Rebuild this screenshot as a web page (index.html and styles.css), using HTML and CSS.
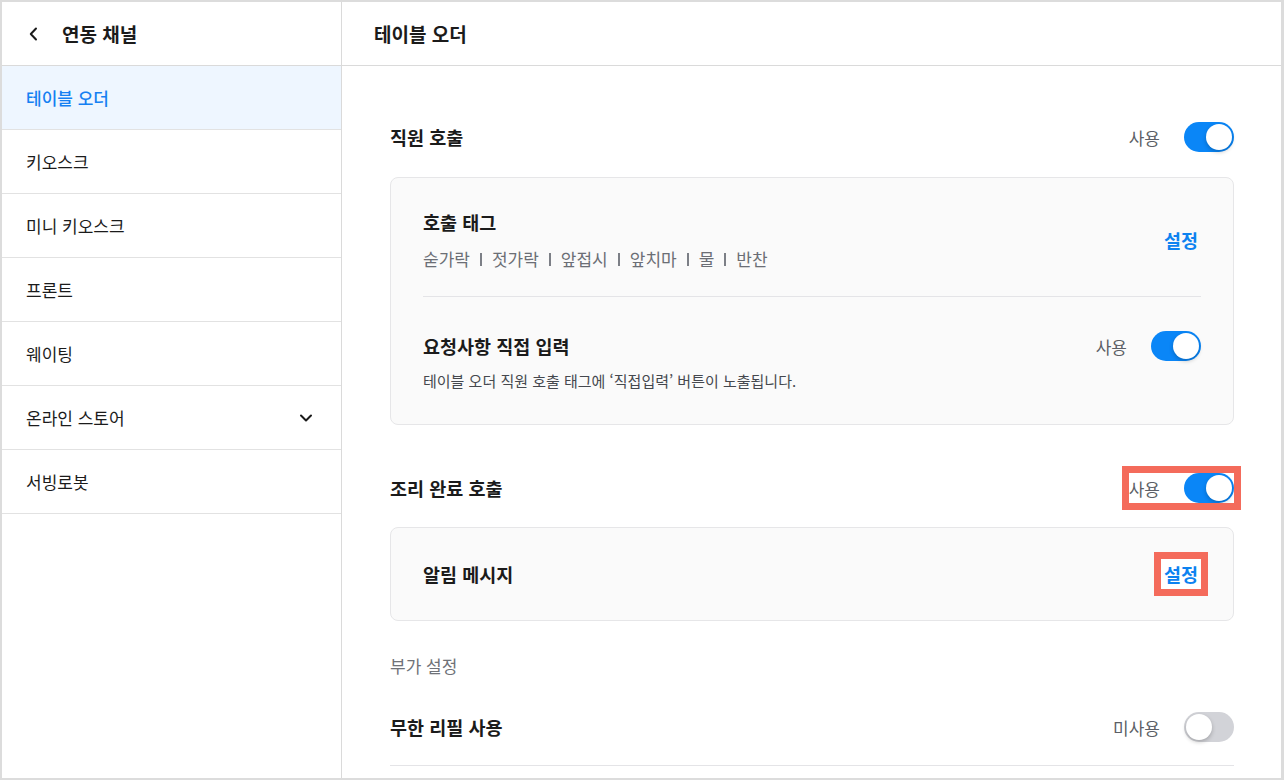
FILE: index.html
```html
<!DOCTYPE html>
<html lang="ko">
<head>
<meta charset="utf-8">
<title>테이블 오더</title>
<link rel="stylesheet" href="styles.css">
</head>
<body>
<div class="frame">
  <aside class="sidebar">
    <div class="side-head">
      <svg class="back" width="12" height="14" viewBox="0 0 12 14"><path d="M8 1.5 L2.8 7 L8 12.5" fill="none" stroke="#1a1a1a" stroke-width="2" stroke-linecap="round" stroke-linejoin="round"/></svg>
      <span class="side-title">연동 채널</span>
    </div>
    <ul class="menu">
      <li class="menu-item active">테이블 오더</li>
      <li class="menu-item">키오스크</li>
      <li class="menu-item">미니 키오스크</li>
      <li class="menu-item">프론트</li>
      <li class="menu-item">웨이팅</li>
      <li class="menu-item has-sub">온라인 스토어
        <svg class="chev" width="14" height="10" viewBox="0 0 14 10"><path d="M2 2.5 L7 7.5 L12 2.5" fill="none" stroke="#1a1a1a" stroke-width="2" stroke-linecap="round" stroke-linejoin="round"/></svg>
      </li>
      <li class="menu-item">서빙로봇</li>
    </ul>
  </aside>
  <main class="main">
    <header class="main-head">테이블 오더</header>
    <div class="content">
      <div class="row">
        <span class="row-title">직원 호출</span>
        <div class="switch-group">
          <span class="switch-label">사용</span>
          <span class="toggle on"><span class="knob"></span></span>
        </div>
      </div>
      <div class="card first-card">
        <div class="card-item tag-item">
          <div class="tag-info">
            <div class="item-title">호출 태그</div>
            <div class="tags">
              <span>숟가락</span><span class="sep"></span>
              <span>젓가락</span><span class="sep"></span>
              <span>앞접시</span><span class="sep"></span>
              <span>앞치마</span><span class="sep"></span>
              <span>물</span><span class="sep"></span>
              <span>반찬</span>
            </div>
          </div>
          <span class="link-btn">설정</span>
        </div>
        <div class="card-item req-item">
          <div class="row">
            <span class="item-title">요청사항 직접 입력</span>
            <div class="switch-group">
              <span class="switch-label">사용</span>
              <span class="toggle on"><span class="knob"></span></span>
            </div>
          </div>
          <p class="desc">테이블 오더 직원 호출 태그에 ‘직접입력’ 버튼이 노출됩니다.</p>
        </div>
      </div>

      <div class="row section-gap">
        <span class="row-title">조리 완료 호출</span>
        <div class="switch-group highlight">
          <span class="switch-label">사용</span>
          <span class="toggle on"><span class="knob"></span></span>
        </div>
      </div>
      <div class="card second-card">
        <div class="row">
          <span class="item-title">알림 메시지</span>
          <span class="link-btn highlight">설정</span>
        </div>
      </div>

      <div class="sub-label">부가 설정</div>
      <div class="row last-row">
        <span class="row-title">무한 리필 사용</span>
        <div class="switch-group">
          <span class="switch-label">미사용</span>
          <span class="toggle off"><span class="knob"></span></span>
        </div>
      </div>
    </div>
  </main>
</div>
</body>
</html>
```
FILE: styles.css
```css
* { box-sizing: border-box; }
html, body { margin: 0; padding: 0; background: #ffffff; }
body {
  font-family: "Noto Sans CJK KR", "Noto Sans", sans-serif;
  color: #1b1b1b;
}
.frame {
  width: 1284px;
  height: 780px;
  border: 2px solid #dcdcdc;
  border-right-width: 3px;
  display: flex;
  overflow: hidden;
  background: #fff;
}
.sidebar {
  width: 340px;
  flex: none;
  border-right: 1px solid #dadada;
}
.side-head {
  height: 64px;
  border-bottom: 1px solid #dadada;
  display: flex;
  align-items: center;
  padding-left: 26px;
}
.back { margin-right: 22px; }
.side-title {
  font-size: 19px;
  font-weight: 700;
}
.menu { list-style: none; margin: 0; padding: 0; }
.menu-item {
  height: 64px;
  border-bottom: 1px solid #e2e2e2;
  display: flex;
  align-items: center;
  justify-content: space-between;
  padding: 0 28px 0 24px;
  font-size: 17px;
  color: #1b1b1b;
}
.menu-item.active {
  background: #eef6ff;
  color: #1580f2;
  font-weight: 500;
}
.main { flex: 1; min-width: 0; }
.main-head {
  height: 64px;
  border-bottom: 1px solid #dadada;
  display: flex;
  align-items: center;
  padding-left: 32px;
  font-size: 19px;
  font-weight: 700;
}
.content { padding: 56px 47px 0 48px; }
.row {
  display: flex;
  align-items: center;
  justify-content: space-between;
  height: 30px;
}
.row-title { font-size: 18.5px; font-weight: 700; }
.item-title { font-size: 18.5px; font-weight: 700; line-height: 24px; }
.switch-group { display: flex; align-items: center; gap: 24px; background: #fff; }
.card .switch-group { background: transparent; }
.switch-label { font-size: 17px; color: #5c5f66; }
.toggle {
  width: 50px;
  height: 30px;
  border-radius: 15px;
  display: flex;
  align-items: center;
  padding: 0 2px;
}
.toggle.on { background: #0a86f7; justify-content: flex-end; }
.toggle.off { background: #d2d3d8; justify-content: flex-start; }
.knob {
  width: 26px;
  height: 26px;
  border-radius: 50%;
  background: #fff;
  box-shadow: 0 2px 4px rgba(0,0,0,0.22);
}
.card {
  background: #fafafa;
  border: 1px solid #e6e6e8;
  border-radius: 8px;
}
.first-card { margin-top: 25px; padding: 0 32px; }
.tag-item {
  display: flex;
  align-items: center;
  justify-content: space-between;
  padding: 32px 0 26px;
  border-bottom: 1px solid #e4e4e7;
}
.tags {
  margin-top: 14px;
  display: flex;
  align-items: center;
  font-size: 17px;
  line-height: 22px;
  color: #6b6e75;
}
.sep {
  width: 2px;
  height: 13px;
  background: #7c7f86;
  margin: 0 10px 0 10px;
}
.link-btn {
  width: 40px;
  height: 30px;
  display: flex;
  align-items: center;
  justify-content: center;
  font-size: 18.5px;
  font-weight: 700;
  color: #0d82f0;
  white-space: nowrap;
}
.req-item { padding: 34px 0 33px; }
.desc {
  margin: 10px 0 0;
  font-size: 15px;
  line-height: 20px;
  color: #45484e;
}
.section-gap { margin-top: 48px; }
.second-card { margin-top: 24px; padding: 31px 32px; }
.highlight {
  outline: 7px solid #f46b5b;
  background: #fff;
}
.sub-label {
  margin-top: 34px;
  font-size: 17px;
  line-height: 22px;
  color: #6f7278;
}
.last-row {
  margin-top: 35px;
  height: 30px;
  box-sizing: content-box;
  padding-bottom: 23px;
  border-bottom: 1px solid #e4e4e7;
}
```
